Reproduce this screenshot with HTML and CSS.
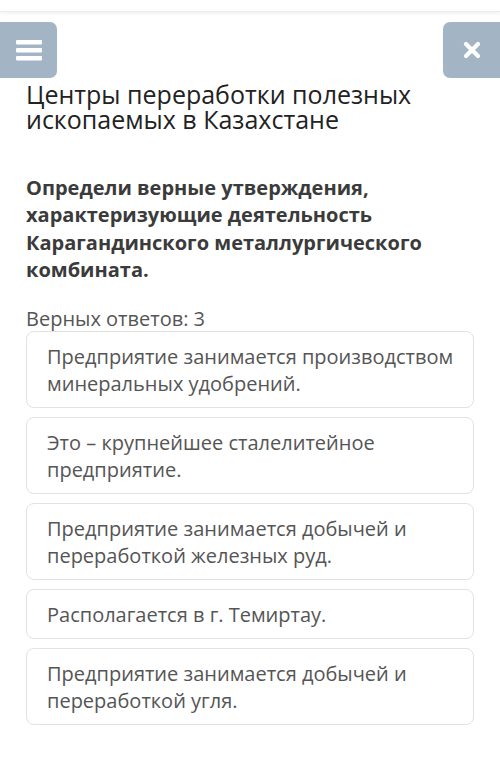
FILE: index.html
```html
<!DOCTYPE html>
<html lang="ru">
<head>
    <meta charset="UTF-8">
    <meta name="viewport" content="width=device-width, initial-scale=1.0">
    <title>Центры переработки полезных ископаемых в Казахстане</title>
    <link rel="stylesheet" href="styles.css">
</head>
<body>
    <div class="topbar"></div>
    <div class="toolbar">
        <button class="tool-btn menu-btn" aria-label="Меню">
            <svg width="26" height="24" viewBox="0 0 26 24">
                <rect x="0" y="2" width="26" height="4.5" rx="1" fill="#fff"/>
                <rect x="0" y="10" width="26" height="4.5" rx="1" fill="#fff"/>
                <rect x="0" y="18" width="26" height="4.5" rx="1" fill="#fff"/>
            </svg>
        </button>
        <button class="tool-btn close-btn" aria-label="Закрыть">
            <svg width="18" height="18" viewBox="0 0 18 18">
                <path d="M3 3 L15 15 M15 3 L3 15" stroke="#fff" stroke-width="4.2" stroke-linecap="round"/>
            </svg>
        </button>
    </div>

    <div class="content">
        <h1 class="title">Центры переработки полезных ископаемых в Казахстане</h1>

        <p class="question">Определи верные утверждения, характеризующие деятельность Карагандинского металлургического комбината.</p>

        <div class="hint">Верных ответов: 3</div>

        <div class="options">
            <div class="option">Предприятие занимается производством минеральных удобрений.</div>
            <div class="option">Это – крупнейшее сталелитейное предприятие.</div>
            <div class="option">Предприятие занимается добычей и переработкой железных руд.</div>
            <div class="option">Располагается в г. Темиртау.</div>
            <div class="option">Предприятие занимается добычей и переработкой угля.</div>
        </div>
    </div>
</body>
</html>
```

FILE: styles.css
```css
body {
    font-family: "Open Sans", "Noto Sans", sans-serif;
    margin: 0;
    padding: 0;
    background-color: #fff;
    color: #333;
}
.topbar {
    height: 11px;
    border-bottom: 1px solid #ececec;
    box-shadow: 0 2px 3px rgba(0, 0, 0, 0.05);
}
.toolbar {
    display: flex;
    justify-content: space-between;
    margin-top: 10px;
}
.tool-btn {
    width: 57px;
    height: 56px;
    border: none;
    padding: 0;
    background-color: #a3b5c4;
    display: flex;
    align-items: center;
    justify-content: center;
    cursor: pointer;
}
.menu-btn {
    border-radius: 0 7px 7px 0;
}
.close-btn {
    border-radius: 7px 0 0 7px;
}
.content {
    padding: 0 26px;
}
.title {
    font-size: 25px;
    font-weight: 400;
    line-height: 25px;
    color: #222;
    margin: 4px 0 0;
}
.question {
    font-size: 20px;
    font-weight: 700;
    line-height: 27.3px;
    color: #3b3b3b;
    margin: 42px 0 0;
}
.hint {
    font-size: 20px;
    color: #555;
    margin-top: 24px;
    line-height: 24px;
}
.options {
    display: flex;
    flex-direction: column;
    gap: 9px;
}
.option {
    border: 1px solid #e2e2e2;
    border-radius: 8px;
    padding: 10.5px 10px 10.5px 20px;
    font-size: 20px;
    line-height: 27px;
    color: #555;
}
```
